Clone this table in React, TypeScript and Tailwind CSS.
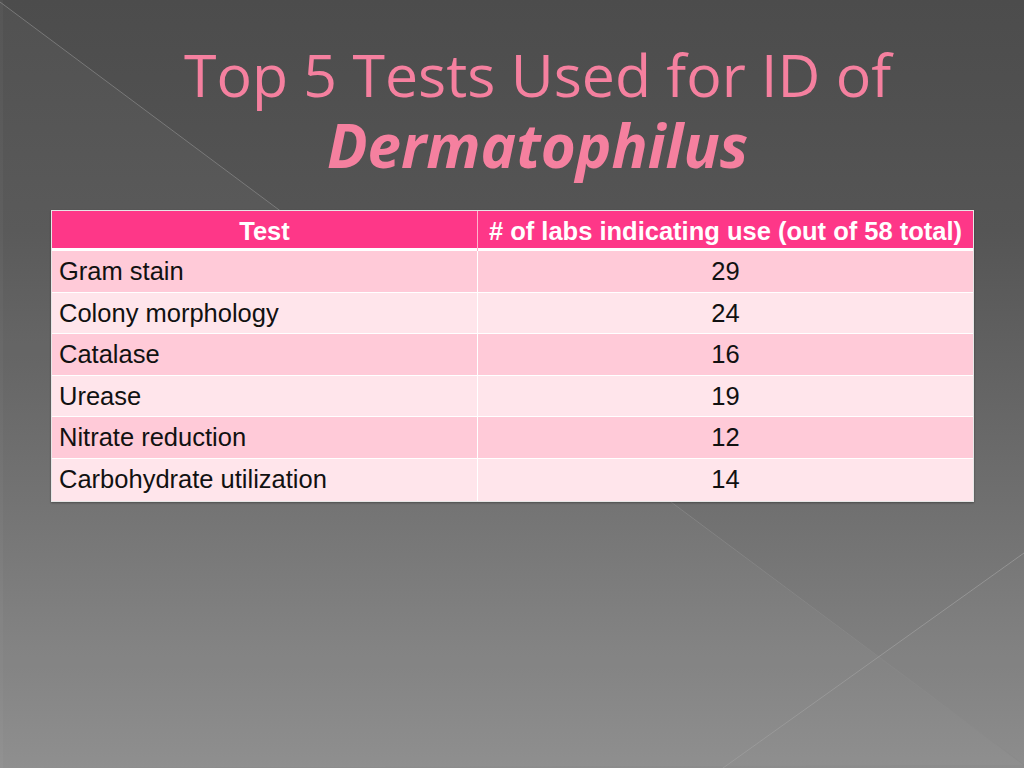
import React from "react";

const rows: [string, string][] = [
  ["Gram stain", "29"],
  ["Colony morphology", "24"],
  ["Catalase", "16"],
  ["Urease", "19"],
  ["Nitrate reduction", "12"],
  ["Carbohydrate utilization", "14"],
];

function Background() {
  return (
    <svg
      className="absolute inset-0"
      width="1024"
      height="768"
      viewBox="0 0 1024 768"
      aria-hidden="true"
    >
      <defs>
        <linearGradient id="bg" x1="0" y1="0" x2="0" y2="1">
          <stop offset="0" stopColor="#4c4c4c" />
          <stop offset="0.3" stopColor="#555555" />
          <stop offset="0.65" stopColor="#6f6f6f" />
          <stop offset="1" stopColor="#8c8c8c" />
        </linearGradient>
      </defs>
      <rect x="0" y="0" width="1024" height="768" fill="url(#bg)" />
      <polygon points="0,2 1024,765 0,768" fill="#ffffff" opacity="0.03" />
      <polygon points="877,657 1024,553 1024,765" fill="#ffffff" opacity="0.015" />
      <line x1="0" y1="2" x2="1024" y2="765" stroke="#8a8a8a" strokeWidth="1" opacity="0.7" />
      <line x1="1024" y1="553" x2="723" y2="768" stroke="#a0a0a0" strokeWidth="1" opacity="0.7" />
      <rect x="0" y="0" width="3" height="768" fill="#ffffff" opacity="0.03" />
    </svg>
  );
}

export default function App() {
  return (
    <div className="relative w-[1024px] h-[768px] overflow-hidden">
      <Background />
      <div className="relative flex flex-col">
        <div
          className="ml-[51px] w-[973px] pt-[39px] text-center text-[59px] leading-[71px] text-[#f5809f]"
          style={{ fontFamily: '"Open Sans", "Noto Sans", sans-serif' }}
        >
          <div>Top 5 Tests Used for ID of</div>
          <div className="font-bold italic text-[60px]">Dermatophilus</div>
        </div>
        <div
          className="ml-[51px] mt-[29px] w-[923px] border border-[#e6e6e6] shadow-[0_1px_2px_rgba(0,0,0,0.35)]"
          style={{ fontFamily: '"Liberation Sans", Arial, sans-serif' }}
        >
          <div className="grid grid-cols-[426px_1fr] h-[40px] bg-[#fe3788] text-white font-bold text-[25.5px] leading-[40px] border-b-[3px] border-white">
            <div className="text-center border-r border-[#ffb3cc]">Test</div>
            <div className="text-center">
              # of labs indicating use (out of 58 total)
            </div>
          </div>
          {rows.map(([name, n], i) => (
            <div
              key={name}
              className={
                "grid grid-cols-[426px_1fr] h-[41.6px] text-[25.5px] leading-[40px] text-[#111111] " +
                (i % 2 === 0 ? "bg-[#ffcad8]" : "bg-[#ffe5eb]") +
                (i < rows.length - 1 ? " border-b border-white" : "")
              }
            >
              <div className="pl-[7px] border-r border-white">{name}</div>
              <div className="text-center">{n}</div>
            </div>
          ))}
        </div>
      </div>
    </div>
  );
}
